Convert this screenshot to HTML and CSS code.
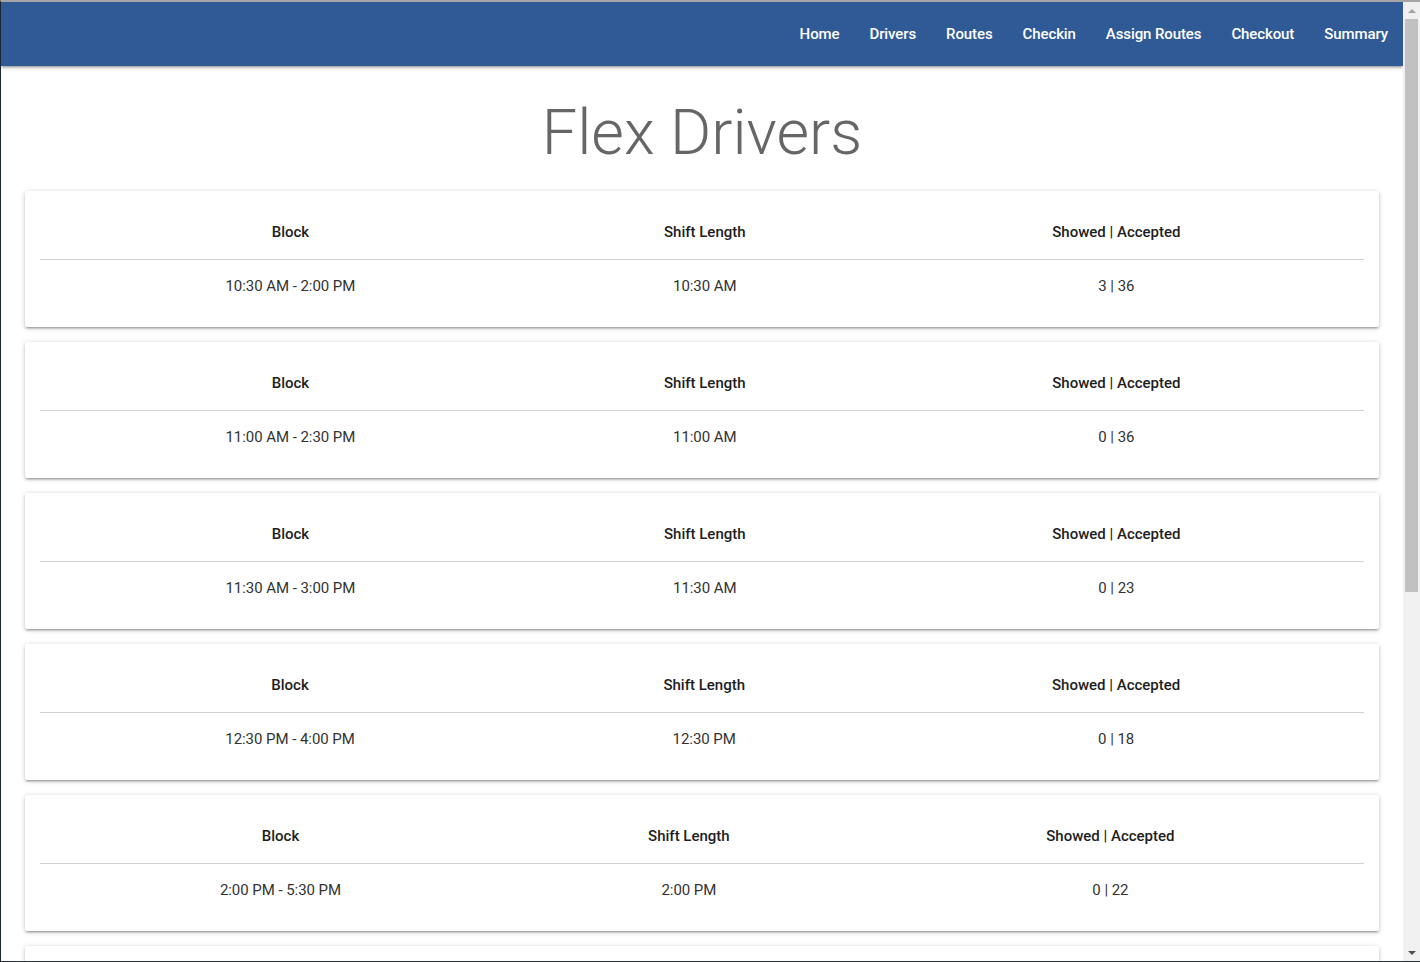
FILE: index.html
```html
<!DOCTYPE html>
<html lang="en">
<head>
<meta charset="utf-8">
<title>Flex Drivers</title>
<link rel="stylesheet" href="styles.css">
</head>
<body>
<div class="window">
  <div class="page">
    <nav class="navbar">
      <ul class="nav-links">
        <li><a href="#">Home</a></li>
        <li><a href="#">Drivers</a></li>
        <li><a href="#">Routes</a></li>
        <li><a href="#">Checkin</a></li>
        <li><a href="#">Assign Routes</a></li>
        <li><a href="#">Checkout</a></li>
        <li><a href="#">Summary</a></li>
      </ul>
    </nav>
    <main class="content">
      <h1 class="title">Flex Drivers</h1>
      <div class="cards">
        <div class="card">
          <table class="block-table">
            <thead><tr><th>Block</th><th>Shift Length</th><th>Showed | Accepted</th></tr></thead>
            <tbody><tr><td>10:30 AM - 2:00 PM</td><td>10:30 AM</td><td>3 | 36</td></tr></tbody>
          </table>
        </div>
        <div class="card">
          <table class="block-table">
            <thead><tr><th>Block</th><th>Shift Length</th><th>Showed | Accepted</th></tr></thead>
            <tbody><tr><td>11:00 AM - 2:30 PM</td><td>11:00 AM</td><td>0 | 36</td></tr></tbody>
          </table>
        </div>
        <div class="card">
          <table class="block-table">
            <thead><tr><th>Block</th><th>Shift Length</th><th>Showed | Accepted</th></tr></thead>
            <tbody><tr><td>11:30 AM - 3:00 PM</td><td>11:30 AM</td><td>0 | 23</td></tr></tbody>
          </table>
        </div>
        <div class="card">
          <table class="block-table">
            <thead><tr><th>Block</th><th>Shift Length</th><th>Showed | Accepted</th></tr></thead>
            <tbody><tr><td>12:30 PM - 4:00 PM</td><td>12:30 PM</td><td>0 | 18</td></tr></tbody>
          </table>
        </div>
        <div class="card">
          <table class="block-table">
            <thead><tr><th>Block</th><th>Shift Length</th><th>Showed | Accepted</th></tr></thead>
            <tbody><tr><td>2:00 PM - 5:30 PM</td><td>2:00 PM</td><td>0 | 22</td></tr></tbody>
          </table>
        </div>
        <div class="card card-empty"></div>
      </div>
    </main>
  </div>
  <div class="scrollbar" aria-hidden="true">
    <div class="sb-arrow sb-up"></div>
    <div class="sb-track"><div class="sb-thumb"></div></div>
    <div class="sb-arrow sb-down"></div>
  </div>
</div>
</body>
</html>
```

FILE: styles.css
```css
html, body {
  margin: 0;
  padding: 0;
  height: 100%;
  overflow: hidden;
}

body {
  font-family: Roboto, "Liberation Sans", sans-serif;
  font-size: 15px;
  line-height: 1.5;
  color: rgba(0, 0, 0, 0.87);
  background: #ffffff;
}

.window {
  box-sizing: border-box;
  height: 962px;
  display: flex;
  border-top: 2px solid #a6a6a6;
  border-left: 1px solid #1d2631;
  border-bottom: 1px solid #2b2f33;
  overflow: hidden;
}

.page {
  flex: 1;
  min-width: 0;
  overflow: hidden;
  background: #ffffff;
}

.navbar {
  position: relative;
  z-index: 2;
  height: 64px;
  background: #305a96;
  box-shadow: 0 2px 2px 0 rgba(0, 0, 0, 0.14), 0 3px 1px -2px rgba(0, 0, 0, 0.12), 0 1px 5px 0 rgba(0, 0, 0, 0.2);
}

.nav-links {
  list-style: none;
  margin: 0;
  padding: 0;
  height: 64px;
  display: flex;
  justify-content: flex-end;
}

.nav-links a {
  display: block;
  padding: 0 15px;
  line-height: 64px;
  font-size: 15px;
  font-weight: 500;
  letter-spacing: -0.1px;
  color: #ffffff;
  text-decoration: none;
}

.content {
  padding: 0 24px;
}

.title {
  margin: 32px 0 24px;
  font-size: 63px;
  line-height: 110%;
  font-weight: 300;
  color: #666666;
  text-align: center;
}

.cards {
  display: flex;
  flex-direction: column;
  gap: 15px;
}

.card {
  background: #ffffff;
  padding: 15px;
  border-radius: 2px;
  box-shadow: 0 2px 2px 0 rgba(0, 0, 0, 0.14), 0 3px 1px -2px rgba(0, 0, 0, 0.12), 0 1px 5px 0 rgba(0, 0, 0, 0.2);
}

.card-empty {
  min-height: 106px;
}

.block-table {
  width: 100%;
  border-collapse: collapse;
  border-spacing: 0;
}

.block-table th,
.block-table td {
  padding: 15px 5px;
  text-align: center;
  vertical-align: middle;
  white-space: nowrap;
}

.block-table th {
  font-weight: 500;
  color: #1e1e1e;
}

.block-table td {
  font-weight: 400;
  color: #333333;
  letter-spacing: -0.05px;
}

.block-table thead tr {
  border-bottom: 1px solid #d2d2d2;
}

/* fake browser scrollbar */
.scrollbar {
  width: 17px;
  flex: 0 0 17px;
  background: #f0f0f0;
  display: flex;
  flex-direction: column;
}

.sb-arrow {
  height: 17px;
  display: flex;
  align-items: center;
  justify-content: center;
}

.sb-up::before,
.sb-down::before {
  content: "";
  width: 0;
  height: 0;
  border-left: 4px solid transparent;
  border-right: 4px solid transparent;
}

.sb-up::before {
  border-bottom: 4px solid #a3a3a3;
}

.sb-down::before {
  border-top: 4px solid #505050;
}

.sb-track {
  flex: 1;
  padding: 0 2px;
}

.sb-thumb {
  height: 573px;
  background: #c1c1c1;
}
```
